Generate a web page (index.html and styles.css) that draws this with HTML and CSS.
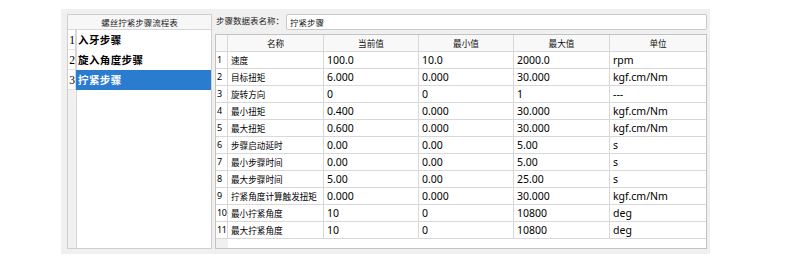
FILE: index.html
```html
<!DOCTYPE html>
<html lang="zh-CN">
<head>
<meta charset="utf-8">
<title>螺丝拧紧步骤流程表</title>
<link rel="stylesheet" href="styles.css">
</head>
<body>
<div class="window">
  <div class="steps">
    <div class="steps-head">螺丝拧紧步骤流程表</div>
    <div class="steps-body">
      <div class="step"><span class="num">1</span><span class="name">入牙步骤</span></div>
      <div class="step"><span class="num">2</span><span class="name">旋入角度步骤</span></div>
      <div class="step selected"><span class="num">3</span><span class="name">拧紧步骤</span></div>
    </div>
  </div>
  <div class="main">
    <div class="name-row">
      <span class="label">步骤数据表名称：</span>
      <div class="input">拧紧步骤</div>
    </div>
    <div class="table">
      <div class="row head">
        <div class="c rn"></div><div class="c">名称</div><div class="c">当前值</div><div class="c">最小值</div><div class="c">最大值</div><div class="c">单位</div>
      </div>
      <div class="row"><div class="c rn">1</div><div class="c zh">速度</div><div class="c">100.0</div><div class="c">10.0</div><div class="c">2000.0</div><div class="c">rpm</div></div>
      <div class="row"><div class="c rn">2</div><div class="c zh">目标扭矩</div><div class="c">6.000</div><div class="c">0.000</div><div class="c">30.000</div><div class="c">kgf.cm/Nm</div></div>
      <div class="row"><div class="c rn">3</div><div class="c zh">旋转方向</div><div class="c">0</div><div class="c">0</div><div class="c">1</div><div class="c">---</div></div>
      <div class="row"><div class="c rn">4</div><div class="c zh">最小扭矩</div><div class="c">0.400</div><div class="c">0.000</div><div class="c">30.000</div><div class="c">kgf.cm/Nm</div></div>
      <div class="row"><div class="c rn">5</div><div class="c zh">最大扭矩</div><div class="c">0.600</div><div class="c">0.000</div><div class="c">30.000</div><div class="c">kgf.cm/Nm</div></div>
      <div class="row"><div class="c rn">6</div><div class="c zh">步骤启动延时</div><div class="c">0.00</div><div class="c">0.00</div><div class="c">5.00</div><div class="c">s</div></div>
      <div class="row"><div class="c rn">7</div><div class="c zh">最小步骤时间</div><div class="c">0.00</div><div class="c">0.00</div><div class="c">5.00</div><div class="c">s</div></div>
      <div class="row"><div class="c rn">8</div><div class="c zh">最大步骤时间</div><div class="c">5.00</div><div class="c">0.00</div><div class="c">25.00</div><div class="c">s</div></div>
      <div class="row"><div class="c rn">9</div><div class="c zh">拧紧角度计算触发扭矩</div><div class="c">0.000</div><div class="c">0.000</div><div class="c">30.000</div><div class="c">kgf.cm/Nm</div></div>
      <div class="row"><div class="c rn">10</div><div class="c zh">最小拧紧角度</div><div class="c">10</div><div class="c">0</div><div class="c">10800</div><div class="c">deg</div></div>
      <div class="row"><div class="c rn">11</div><div class="c zh">最大拧紧角度</div><div class="c">10</div><div class="c">0</div><div class="c">10800</div><div class="c">deg</div></div>
    </div>
  </div>
</div>
</body>
</html>
```

FILE: styles.css
```css
html, body {
  margin: 0;
  padding: 0;
  background: #ffffff;
}

body {
  font-family: "Noto Sans", "Noto Sans CJK SC", sans-serif;
  color: #000;
}

.window {
  margin: 9px 0 0 61px;
  width: 649px;
  height: 245px;
  box-sizing: border-box;
  padding: 5px 3px 5px 6px;
  background: #f0f0f0;
  display: flex;
  gap: 3px;
}

/* ---------- left step list ---------- */
.steps {
  width: 145px;
  height: 235px;
  box-sizing: border-box;
  border: 1px solid #cfcfcf;
  background: #fff;
  display: flex;
  flex-direction: column;
}

.steps-head {
  height: 15px;
  flex: none;
  box-sizing: border-box;
  border-bottom: 1px solid #d6d6d6;
  background: #f7f7f7;
  font-family: "Noto Sans CJK SC", sans-serif;
  font-size: 8.5px;
  line-height: 14px;
  text-align: center;
  color: #222;
}

.steps-body {
  flex: 1;
  background: linear-gradient(to right, #f0f0f0 8px, #d6d6d6 8px, #d6d6d6 9px, #fff 9px);
}

.step {
  height: 20px;
  display: flex;
  align-items: stretch;
}

.step .num {
  width: 8px;
  flex: none;
  box-sizing: border-box;
  background: #fff;
  border-right: 1px solid #d6d6d6;
  border-bottom: 1px solid #e2e2e2;
  font-family: "Liberation Serif", serif;
  font-size: 11.5px;
  line-height: 20px;
  text-align: center;
  padding-left: 1px;
}

.step .name {
  flex: 1;
  padding-left: 2px;
  font-family: "Noto Sans CJK SC", sans-serif;
  font-weight: bold;
  font-size: 10.5px;
  line-height: 19px;
  letter-spacing: 0.4px;
}

.step.selected .name {
  background: #2b7bd0;
  color: #fff;
}

/* ---------- right side ---------- */
.main {
  width: 492px;
  display: flex;
  flex-direction: column;
}

.name-row {
  height: 16px;
  display: flex;
  align-items: stretch;
  margin-bottom: 4px;
}

.label {
  width: 71px;
  box-sizing: border-box;
  padding-left: 1px;
  font-family: "Noto Sans CJK SC", sans-serif;
  font-size: 8.5px;
  line-height: 13px;
  color: #222;
  white-space: nowrap;
}

.input {
  flex: 1;
  box-sizing: border-box;
  border: 1px solid #c9c9c9;
  border-radius: 2px;
  background: #fff;
  padding-left: 3px;
  font-family: "Noto Sans CJK SC", sans-serif;
  font-size: 8.5px;
  line-height: 14px;
  color: #111;
}

.table {
  height: 215px;
  box-sizing: border-box;
  border: 1px solid #c2c2c2;
  background: linear-gradient(to right, #f0f0f0 12px, #fff 12px);
}

.row {
  display: grid;
  grid-template-columns: 12px 96px 95px 95px 96px 96px;
  height: 17px;
}

.c {
  box-sizing: border-box;
  border-right: 1px solid #d8d8d8;
  border-bottom: 1px solid #d8d8d8;
  background: #fff;
  padding-left: 3px;
  font-size: 10.5px;
  line-height: 16px;
  white-space: nowrap;
  overflow: hidden;
}

.c:last-child {
  border-right: none;
}

.c.zh {
  font-family: "Noto Sans CJK SC", sans-serif;
  font-size: 8.6px;
}

.c.rn {
  padding-left: 1px;
  font-size: 9px;
  letter-spacing: -0.3px;
}

.head .c {
  background: #f8f8f8;
  text-align: center;
  padding-left: 0;
  font-family: "Noto Sans CJK SC", sans-serif;
  font-size: 8.6px;
  color: #111;
}
```
